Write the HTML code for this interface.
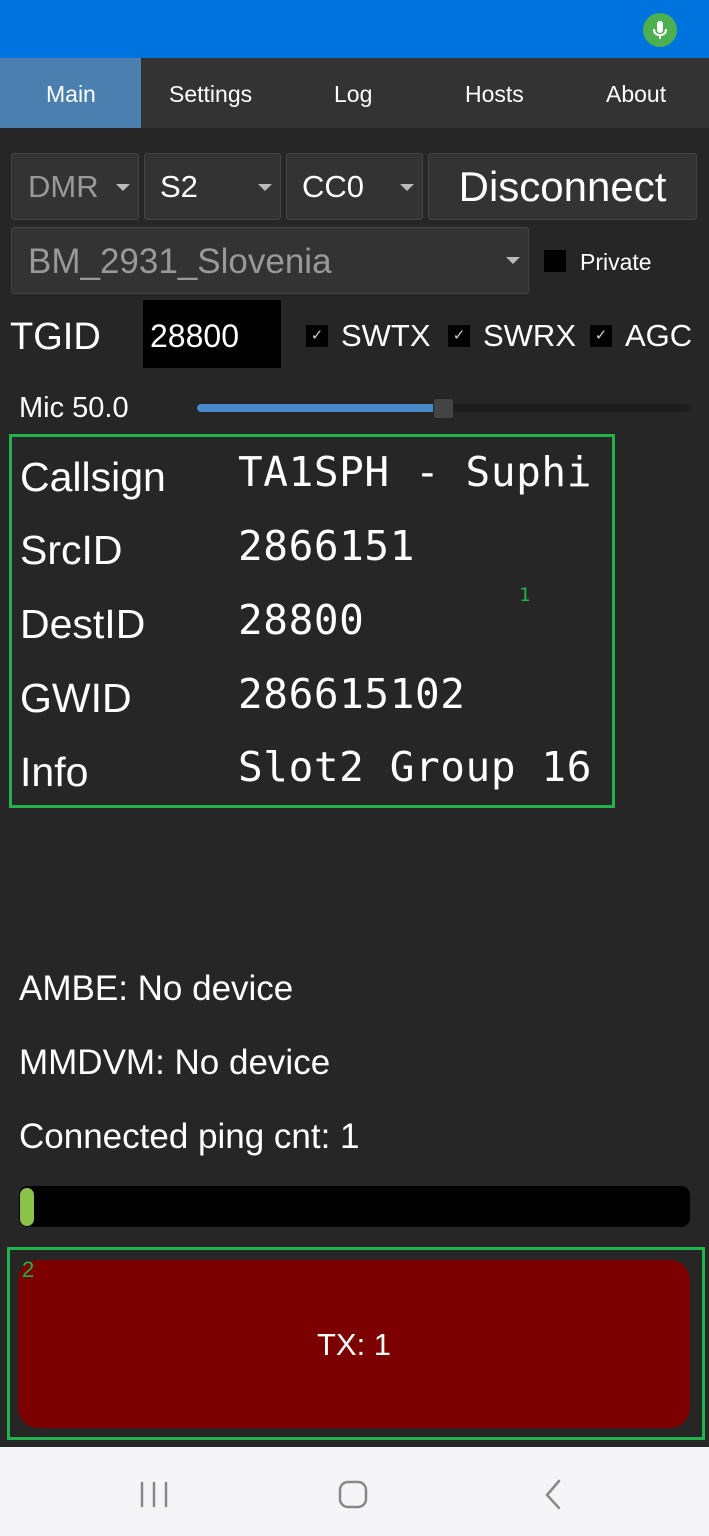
<!DOCTYPE html>
<html><head><meta charset="utf-8"><style>
*{margin:0;padding:0;box-sizing:border-box}
body{width:709px;height:1536px;background:#262626;font-family:"Liberation Sans",sans-serif;color:#fff;position:relative;overflow:hidden}
.a{position:absolute}
.btn{position:absolute;background:#333;border:1px solid #444;border-radius:3px}
.tri{position:absolute;width:0;height:0;border-left:7px solid transparent;border-right:7px solid transparent;border-top:7px solid #bbb}
.lbl{position:absolute;left:20px;font-size:41px;line-height:40px}
.val{position:absolute;left:238px;font-family:"DejaVu Sans Mono","Liberation Mono",monospace;font-size:41px;line-height:44px;letter-spacing:0.6px}
.cb{position:absolute;width:22px;height:22px;background:#000;color:#ccc;font-size:15px;text-align:center;line-height:22px}
.t{position:absolute;font-size:31px;line-height:34px}
.s{position:absolute;font-size:35px;line-height:36px}
</style></head><body>
<div class="a" style="left:0;top:0;width:709px;height:58px;background:#0074de"></div>
<div class="a" style="left:643px;top:13px;width:34px;height:34px;border-radius:50%;background:#4caf50"></div>
<svg class="a" style="left:643px;top:13px" width="34" height="34" viewBox="0 0 34 34"><rect x="14" y="8" width="6" height="12" rx="3" fill="#fff"/><path d="M11 16 q0 6 6 6 q6 0 6-6 M17 22 v4" stroke="#fff" stroke-width="2" fill="none"/></svg>
<div class="a" style="left:0;top:58px;width:709px;height:70px;background:#333"></div>
<div class="a" style="left:0;top:58px;width:141px;height:70px;background:#4a7fb0"></div>
<div class="a" style="top:80px;left:0;width:709px;font-size:23px;line-height:28px">
<span class="a" style="left:46px">Main</span><span class="a" style="left:169px">Settings</span><span class="a" style="left:334px">Log</span><span class="a" style="left:465px">Hosts</span><span class="a" style="left:606px">About</span></div>

<div class="btn" style="left:11px;top:153px;width:128px;height:67px"></div>
<div class="t" style="left:28px;top:170px;color:#999">DMR</div><div class="tri" style="left:116px;top:184px"></div>
<div class="btn" style="left:144px;top:153px;width:137px;height:67px"></div>
<div class="t" style="left:160px;top:170px">S2</div><div class="tri" style="left:258px;top:184px"></div>
<div class="btn" style="left:286px;top:153px;width:137px;height:67px"></div>
<div class="t" style="left:302px;top:170px">CC0</div><div class="tri" style="left:400px;top:184px"></div>
<div class="btn" style="left:428px;top:153px;width:269px;height:67px"></div>
<div class="a" style="left:428px;top:165px;width:269px;text-align:center;font-size:42px;line-height:44px">Disconnect</div>

<div class="btn" style="left:11px;top:227px;width:518px;height:67px"></div>
<div class="t" style="left:28px;top:243px;color:#999;font-size:35px;line-height:38px">BM_2931_Slovenia</div><div class="tri" style="left:506px;top:257px"></div>
<div class="a" style="left:544px;top:250px;width:22px;height:22px;background:#000"></div>
<div class="a" style="left:580px;top:249px;font-size:23px">Private</div>

<div class="a" style="left:10px;top:316px;font-size:38px">TGID</div>
<div class="a" style="left:143px;top:300px;width:138px;height:68px;background:#000"></div>
<div class="a" style="left:150px;top:318px;font-size:32px">28800</div>
<div class="cb" style="left:306px;top:325px">✓</div><div class="t" style="left:341px;top:319px">SWTX</div>
<div class="cb" style="left:448px;top:325px">✓</div><div class="t" style="left:483px;top:319px">SWRX</div>
<div class="cb" style="left:590px;top:325px">✓</div><div class="t" style="left:625px;top:319px">AGC</div>

<div class="a" style="left:19px;top:392px;font-size:29px">Mic 50.0</div>
<div class="a" style="left:197px;top:404px;width:492px;height:8px;border-radius:4px;background:#1c1c1c"></div>
<div class="a" style="left:197px;top:404px;width:246px;height:8px;border-radius:4px;background:#4a8ac8"></div>
<div class="a" style="left:433px;top:398px;width:21px;height:21px;border-radius:3px;background:#444;border:1px solid #222"></div>

<div class="a" style="left:9px;top:434px;width:606px;height:374px;border:3px solid #22b24c"></div>
<div class="lbl" style="top:457px">Callsign</div><div class="val" style="top:450px">TA1SPH - Suphi</div>
<div class="lbl" style="top:530px">SrcID</div><div class="val" style="top:524px">2866151</div>
<div class="lbl" style="top:604px">DestID</div><div class="val" style="top:598px">28800</div>
<div class="lbl" style="top:678px">GWID</div><div class="val" style="top:672px">286615102</div>
<div class="lbl" style="top:752px">Info</div><div class="val" style="top:745px">Slot2 Group 16</div>
<div class="a" style="left:519px;top:584px;color:#22b24c;font-family:'DejaVu Sans Mono',monospace;font-size:19px">1</div>

<div class="s" style="left:19px;top:971px">AMBE: No device</div>
<div class="s" style="left:19px;top:1045px">MMDVM: No device</div>
<div class="s" style="left:19px;top:1119px">Connected ping cnt: 1</div>

<div class="a" style="left:19px;top:1186px;width:671px;height:41px;border-radius:9px;background:#000"></div>
<div class="a" style="left:20px;top:1188px;width:14px;height:38px;border-radius:7px;background:#8bc34a"></div>

<div class="a" style="left:7px;top:1247px;width:698px;height:193px;border:3px solid #22b24c"></div>
<div class="a" style="left:18px;top:1260px;width:672px;height:168px;border-radius:20px;background:#7c0000"></div>
<div class="a" style="left:18px;top:1327px;width:672px;text-align:center;font-size:31px">TX: 1</div>
<div class="a" style="left:22px;top:1257px;color:#22b24c;font-size:22px">2</div>

<div class="a" style="left:0;top:1447px;width:709px;height:89px;background:#f5f5f7"></div>
<svg class="a" style="left:0;top:1447px" width="709" height="89">
<g stroke="#888" stroke-width="2.5" fill="none" stroke-linecap="round">
<path d="M142 36v23 M154 36v23 M166 36v23"/>
<rect x="340" y="35" width="26" height="25" rx="8"/>
<path d="M559 34 l-12 14 l12 13"/>
</g></svg>
</body></html>
